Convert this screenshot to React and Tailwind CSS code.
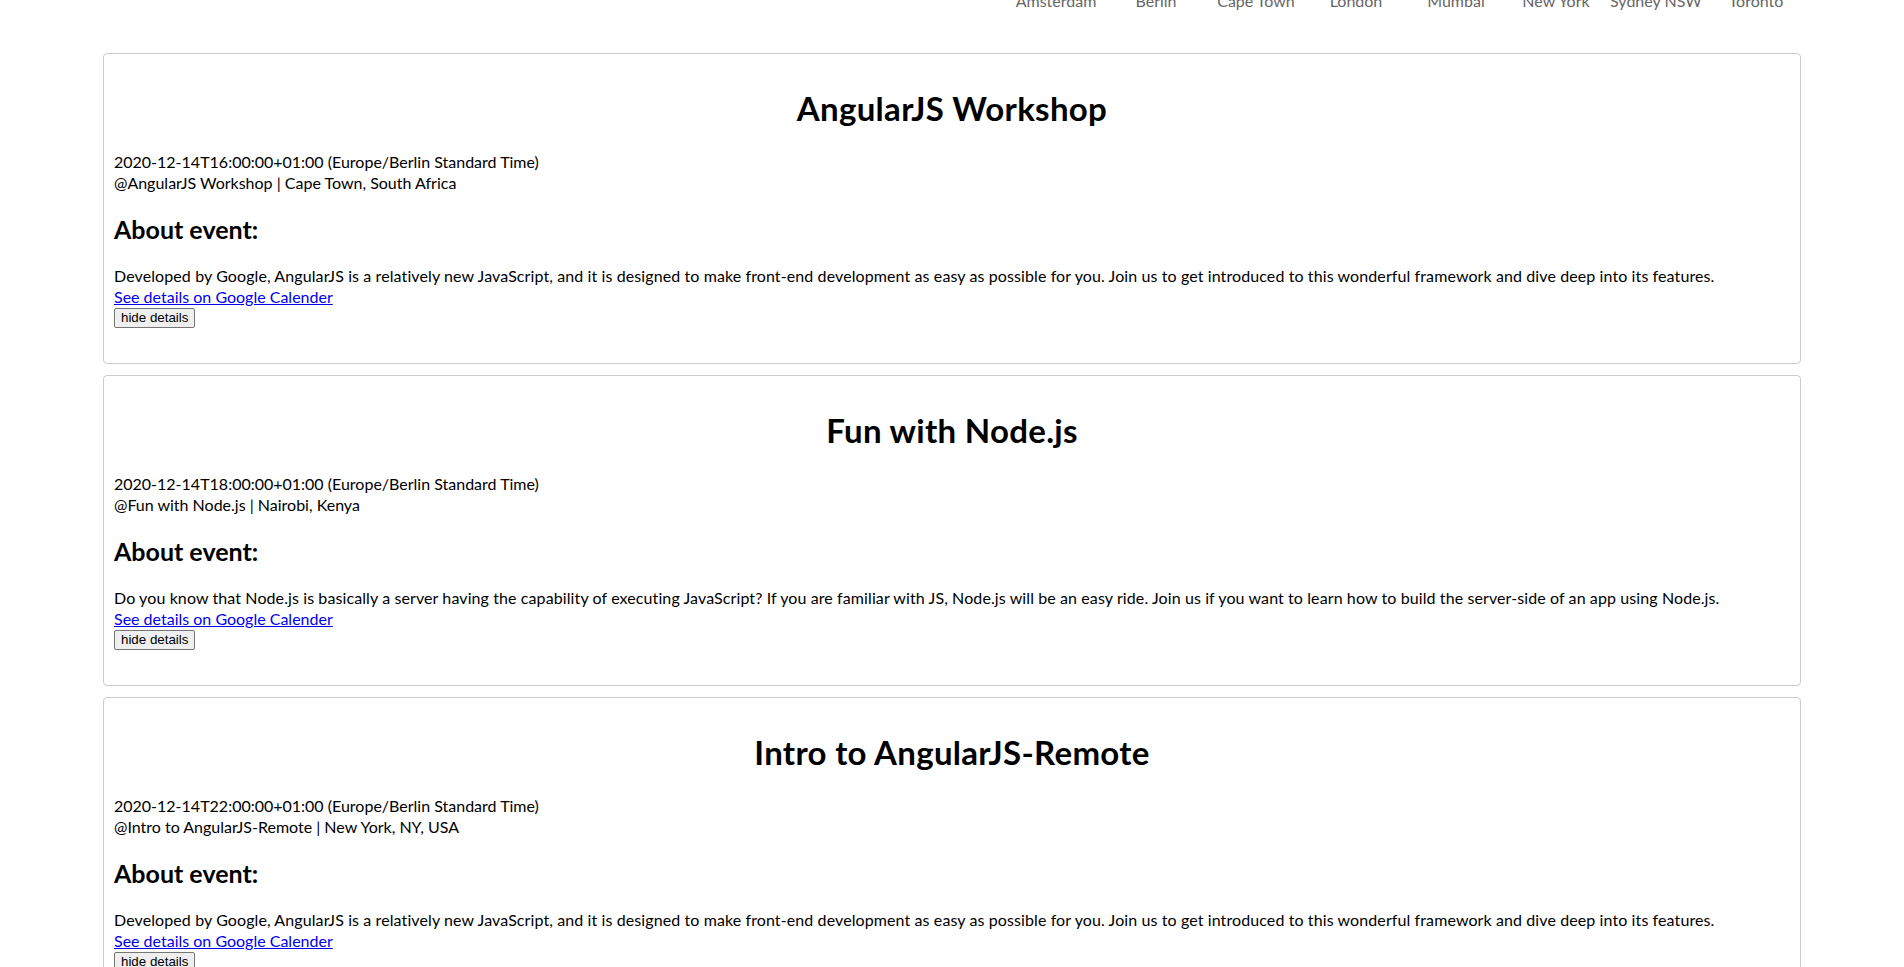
import React from 'react';

const cities = ['Amsterdam', 'Berlin', 'Cape Town', 'London', 'Mumbai', 'New York', 'Sydney NSW', 'Toronto'];

const angularText =
  'Developed by Google, AngularJS is a relatively new JavaScript, and it is designed to make front-end development as easy as possible for you. Join us to get introduced to this wonderful framework and dive deep into its features.';

const events = [
  {
    title: 'AngularJS Workshop',
    start: '2020-12-14T16:00:00+01:00',
    location: 'Cape Town, South Africa',
    description: angularText,
  },
  {
    title: 'Fun with Node.js',
    start: '2020-12-14T18:00:00+01:00',
    location: 'Nairobi, Kenya',
    description:
      'Do you know that Node.js is basically a server having the capability of executing JavaScript? If you are familiar with JS, Node.js will be an easy ride. Join us if you want to learn how to build the server-side of an app using Node.js.',
  },
  {
    title: 'Intro to AngularJS-Remote',
    start: '2020-12-14T22:00:00+01:00',
    location: 'New York, NY, USA',
    description: angularText,
  },
];

const EventCard = ({ event }) => (
  <div className="mx-auto mb-[11px] w-[1698px] rounded-[4px] border border-[#cccccc] bg-white px-[10px] pt-[33px] pb-[35px]">
    <h1 className="text-center text-[33px] font-bold leading-[42px] tracking-[0.3px]">{event.title}</h1>
    <div className="mt-[22px] leading-[21px]">
      <div>{event.start} (Europe/Berlin Standard Time)</div>
      <div>
        @{event.title} | {event.location}
      </div>
    </div>
    <h2 className="mt-[20px] text-[25px] font-bold leading-[32px]">About event:</h2>
    <p className="mt-[20px] leading-[21px] tracking-[0.1px]">{event.description}</p>
    <a href="#" className="block leading-[21px] text-[#0000ee] underline">
      See details on Google Calender
    </a>
    <button className="mt-[1px] block h-[20px] rounded-[2px] border border-[#767676] bg-[#efefef] px-[6px] text-[13.33px] leading-[16px] text-black [font-family:Arial,'Liberation_Sans',sans-serif]">
      hide details
    </button>
  </div>
);

export default function App() {
  return (
    <div className="min-h-screen bg-white text-[16px] text-black [font-family:Lato,'Open_Sans',sans-serif]">
      <nav className="-mt-[10px] flex justify-end pr-[98px] leading-[21px] text-[#666666]">
        {cities.map((city) => (
          <a key={city} href="#" className="w-[100px] text-center">
            {city}
          </a>
        ))}
      </nav>
      <div className="mt-[42px]">
        {events.map((event) => (
          <EventCard key={event.title} event={event} />
        ))}
      </div>
    </div>
  );
}
